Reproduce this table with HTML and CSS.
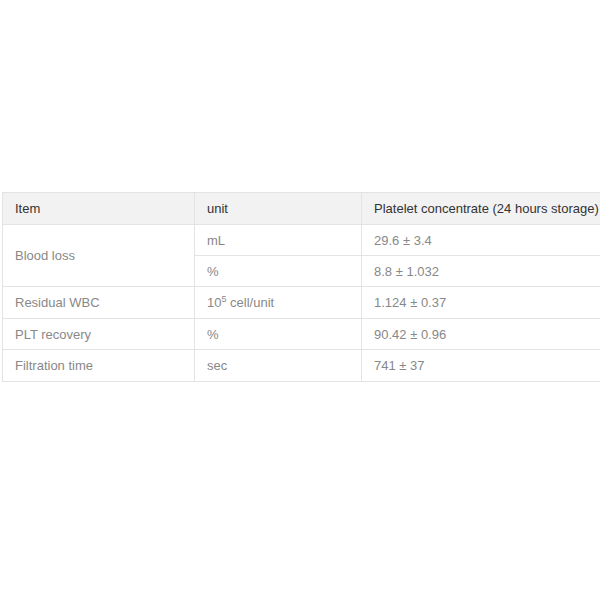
FILE: index.html
```html
<!DOCTYPE html>
<html>
<head>
<meta charset="utf-8">
<link rel="stylesheet" href="styles.css">
</head>
<body>
<div class="wrap">
  <table class="spec">
    <colgroup>
      <col class="c1"><col class="c2"><col class="c3">
    </colgroup>
    <thead>
      <tr><th>Item</th><th>unit</th><th>Platelet concentrate (24 hours storage)</th></tr>
    </thead>
    <tbody>
      <tr><td rowspan="2">Blood loss</td><td>mL</td><td>29.6 ± 3.4</td></tr>
      <tr><td>%</td><td>8.8 ± 1.032</td></tr>
      <tr class="tall"><td>Residual WBC</td><td>10<sup>5</sup> cell/unit</td><td>1.124 ± 0.37</td></tr>
      <tr><td>PLT recovery</td><td>%</td><td>90.42 ± 0.96</td></tr>
      <tr class="tall"><td>Filtration time</td><td>sec</td><td>741 ± 37</td></tr>
    </tbody>
  </table>
</div>
</body>
</html>
```
FILE: styles.css
```css
html, body { margin: 0; padding: 0; background: #fff; overflow: hidden; }
.wrap { padding: 192px 0 0 2px; }
.spec {
  border-collapse: collapse;
  table-layout: fixed;
  width: 598px;
  font-family: "Liberation Sans", Arial, sans-serif;
  font-size: 13px;
}
.c1 { width: 192px; }
.c2 { width: 167px; }
.c3 { width: 239px; }
.spec th, .spec td {
  border: 1px solid #e3e3e3;
  text-align: left;
  padding: 0 0 0 12px;
  height: 30px;
  vertical-align: middle;
  white-space: nowrap;
  overflow: hidden;
}
.spec th:last-child, .spec td:last-child { border-right: none; }
.spec tr.tall td { height: 31px; }
.spec th {
  background: #f2f2f2;
  color: #333;
  font-weight: normal;
  height: 31px;
}
.spec td { color: #888; }
.spec sup { font-size: 9px; line-height: 0; vertical-align: 5px; }
```
